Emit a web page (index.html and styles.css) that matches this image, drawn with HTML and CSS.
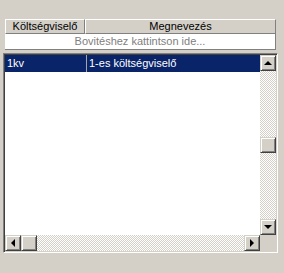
FILE: index.html
```html
<!DOCTYPE html>
<html lang="hu">
<head>
    <meta charset="UTF-8">
    <title>Költségviselők</title>
    <link rel="stylesheet" href="styles.css">
</head>
<body>
    <div class="panel">
        <div class="grid-header">
            <div class="head-cell col-code">Költségviselő</div>
            <div class="head-cell col-name">Megnevezés</div>
        </div>
        <div class="add-row">Bovitéshez kattintson ide...</div>
        <div class="list-box">
            <div class="list-rows">
                <div class="row selected">
                    <div class="cell cell-code">1kv</div>
                    <div class="cell cell-name">1-es költségviselő</div>
                </div>
            </div>
            <div class="vscroll">
                <div class="sbtn"><span class="arrow up"></span></div>
                <div class="track vtrack">
                    <div class="thumb vthumb"></div>
                </div>
                <div class="sbtn"><span class="arrow down"></span></div>
            </div>
            <div class="hscroll">
                <div class="sbtn"><span class="arrow left"></span></div>
                <div class="thumb"></div>
                <div class="track htrack"></div>
                <div class="sbtn"><span class="arrow right"></span></div>
            </div>
            <div class="corner"></div>
        </div>
    </div>
</body>
</html>
```
FILE: styles.css
```css
body {
    margin: 0;
    background-color: #d4d0c8;
    font-family: "Liberation Sans", Arial, sans-serif;
    font-size: 11px;
    color: #000;
}

.panel {
    padding-top: 19px;
    width: 284px;
    height: 273px;
    box-sizing: border-box;
}

.grid-header {
    display: flex;
    margin-left: 5px;
    width: 271px;
    height: 15px;
}

.head-cell {
    box-sizing: border-box;
    height: 15px;
    line-height: 13px;
    text-align: center;
    background-color: #d4d0c8;
    border-top: 1px solid #fff;
    border-left: 1px solid #fff;
    border-right: 1px solid #808080;
    border-bottom: 1px solid #808080;
}

.col-code {
    width: 80px;
}

.col-name {
    flex: 1;
}

.add-row {
    box-sizing: border-box;
    margin-left: 5px;
    width: 271px;
    height: 16px;
    line-height: 15px;
    background-color: #fff;
    color: #808080;
    text-align: center;
    border-right: 1px solid #808080;
    border-bottom: 1px solid #808080;
}

.list-box {
    box-sizing: border-box;
    margin-top: 3px;
    margin-left: 3px;
    width: 275px;
    height: 200px;
    border: 1px solid;
    border-color: #808080 #fff #fff #808080;
    box-shadow: inset 1px 1px #404040, inset -1px -1px #d4d0c8;
    padding: 1px;
    display: grid;
    grid-template-columns: 1fr 16px;
    grid-template-rows: 1fr 16px;
    background-color: #fff;
}

.list-rows {
    background-color: #fff;
    overflow: hidden;
}

.row {
    display: flex;
    height: 17px;
    line-height: 17px;
}

.row.selected {
    background-color: #0a246a;
    color: #fff;
}

.cell {
    box-sizing: border-box;
    padding-left: 2px;
    white-space: nowrap;
}

.cell-code {
    width: 82px;
    border-right: 1px solid #a6a6a6;
}

.cell-name {
    flex: 1;
}

.vscroll {
    display: flex;
    flex-direction: column;
}

.hscroll {
    display: flex;
}

.track {
    flex: 1;
    background-color: #fff;
    background-image: repeating-conic-gradient(#d4d0c8 0 25%, #fff 0 50%);
    background-size: 2px 2px;
}

.vtrack {
    display: flex;
    flex-direction: column;
}

.vthumb {
    margin-top: 66px;
}

.sbtn,
.thumb {
    box-sizing: border-box;
    width: 16px;
    height: 16px;
    flex-shrink: 0;
    background-color: #d4d0c8;
    border: 1px solid;
    border-color: #d4d0c8 #404040 #404040 #d4d0c8;
    box-shadow: inset 1px 1px #fff, inset -1px -1px #808080;
    display: flex;
    align-items: center;
    justify-content: center;
}

.arrow {
    width: 0;
    height: 0;
    border-style: solid;
}

.arrow.up {
    margin-top: -1px;
    border-width: 0 4px 4px 4px;
    border-color: transparent transparent #000 transparent;
}

.arrow.down {
    border-width: 4px 4px 0 4px;
    border-color: #000 transparent transparent transparent;
}

.arrow.left {
    margin-left: -1px;
    border-width: 4px 4px 4px 0;
    border-color: transparent #000 transparent transparent;
}

.arrow.right {
    border-width: 4px 0 4px 4px;
    border-color: transparent transparent transparent #000;
}

.corner {
    background-color: #d4d0c8;
}
```
